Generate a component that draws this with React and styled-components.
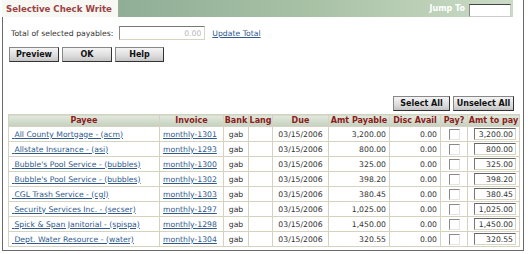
import React from 'react'
import styled, { createGlobalStyle } from 'styled-components'

const GlobalStyle = createGlobalStyle`
  html, body { margin: 0; padding: 0; background: #fff; }
  body { font-family: "DejaVu Sans", Verdana, sans-serif; font-size: 7.7px; color: #333; }
`

const Page = styled.div`
  width: 528px;
  height: 254px;
  overflow: hidden;
`

const Frame = styled.div`
  margin-left: 2px;
  width: 522px;
  height: 251px;
  border-left: 1px solid #6a6a6a;
  border-right: 1px solid #6a6a6a;
  border-bottom: 1px solid #6a6a6a;
  box-sizing: border-box;
`

const TitleRow = styled.div`
  display: flex;
  height: 17px;
  margin-left: -1px;
  margin-right: 10px;
`

const Tab = styled.div`
  display: flex;
  align-items: center;
  padding: 0 6px 0 4px;
  background: #f7f7f3;
  border-right: 1px solid #a0a8a0;
  color: #9a4444;
  font-weight: bold;
  font-size: 8.6px;
`

const Bar = styled.div`
  flex: 1;
  display: flex;
  align-items: center;
  justify-content: flex-end;
  gap: 4px;
  padding-right: 2px;
  background: linear-gradient(to right, #8fae96, #a9c2a6 50%, #cbdbc6);
`

const JumpLabel = styled.span`
  color: #fff;
  font-weight: bold;
  font-size: 8px;
`

const JumpInput = styled.input`
  width: 42px;
  height: 13px;
  box-sizing: border-box;
  border: 1px solid #ccc;
  border-top: 1px solid #444;
  border-left: 1px solid #888;
  background: #fff;
  margin: 3px 0 0;
  padding: 0;
`

const Body = styled.div`
  padding: 9px 5px 0 5px;
`

const TotalRow = styled.div`
  display: flex;
  align-items: center;
  height: 14px;
  padding-left: 3px;
`

const Label = styled.span`
  margin-right: 6px;
`

const AmountBox = styled.input`
  width: 86px;
  height: 14px;
  box-sizing: border-box;
  border: 1px solid #d8d4c4;
  border-top: 1px solid #777;
  border-left: 1px solid #888;
  text-align: right;
  font: inherit;
  color: #b8b8b8;
  padding: 0 3px;
  margin-right: 7px;
`

const Link = styled.a`
  color: #2f5a8e;
  text-decoration: underline;
`

const ButtonRow = styled.div`
  display: flex;
  gap: 3px;
  margin-top: 7px;
  padding-left: 1px;
  justify-content: ${p => (p.$right ? 'flex-end' : 'flex-start')};
  padding-right: ${p => (p.$right ? '1px' : '0')};
`

const Button = styled.button`
  width: ${p => p.$w}px;
  height: 15px;
  padding: 0;
  box-sizing: border-box;
  border: 1px solid #333;
  border-top-color: #888;
  border-left-color: #888;
  background: linear-gradient(to bottom, #f4f4f4, #dcdcdc 60%, #c4c4c4);
  font-family: "DejaVu Sans", Verdana, sans-serif;
  font-size: 8px;
  font-weight: bold;
  color: #111;
`

const SelectRow = styled(ButtonRow)`
  margin-top: 34px;
  padding-right: 4px;
`

const Table = styled.table`
  margin-top: 3px;
  width: 511px;
  border-collapse: collapse;
  table-layout: fixed;
`

const Th = styled.th`
  height: 11px;
  padding: 0;
  background: linear-gradient(to bottom, #e3e9dd, #c3d0bf);
  border: 1px solid #d6d2c0;
  color: #8b1c1c;
  font-weight: bold;
  font-size: 8px;
  text-align: center;
`

const Td = styled.td`
  height: 14px;
  padding: 0 3px;
  border: 1px solid #d6d2c0;
  text-align: ${p => p.$align || 'left'};
  white-space: nowrap;
  overflow: hidden;
`

const Check = styled.span`
  display: inline-block;
  width: 11px;
  height: 11px;
  box-sizing: border-box;
  border: 1px solid #e4e4e4;
  border-top-color: #8a8a8a;
  border-left-color: #8a8a8a;
  background: #fff;
  vertical-align: middle;
`

const PayInput = styled.input`
  width: 42px;
  height: 12px;
  box-sizing: border-box;
  border: 1px solid #d8d4c4;
  border-top: 1px solid #666;
  border-left: 1px solid #777;
  text-align: right;
  font: inherit;
  color: #333;
  padding: 0 2px;
  display: block;
  margin-left: auto;
`

const rows = [
  ['All County Mortgage - (acm)', 'monthly-1301', '3,200.00'],
  ['Allstate Insurance - (asi)', 'monthly-1293', '800.00'],
  ["Bubble's Pool Service - (bubbles)", 'monthly-1300', '325.00'],
  ["Bubble's Pool Service - (bubbles)", 'monthly-1302', '398.20'],
  ['CGL Trash Service - (cgl)', 'monthly-1303', '380.45'],
  ['Security Services Inc. - (secser)', 'monthly-1297', '1,025.00'],
  ['Spick & Span Janitorial - (spispa)', 'monthly-1298', '1,450.00'],
  ['Dept. Water Resource - (water)', 'monthly-1304', '320.55'],
]

const cols = [151, 64, 25, 24, 56, 61, 51, 27, 52]

export default function App() {
  return (
    <Page>
      <GlobalStyle />
      <Frame>
        <TitleRow>
          <Tab>Selective Check Write</Tab>
          <Bar>
            <JumpLabel>Jump To</JumpLabel>
            <JumpInput />
          </Bar>
        </TitleRow>
        <Body>
          <TotalRow>
            <Label>Total of selected payables:</Label>
            <AmountBox readOnly value="0.00" />
            <Link href="#">Update Total</Link>
          </TotalRow>
          <ButtonRow>
            <Button $w={50}>Preview</Button>
            <Button $w={50}>OK</Button>
            <Button $w={49}>Help</Button>
          </ButtonRow>
          <SelectRow $right>
            <Button $w={57}>Select All</Button>
            <Button $w={61}>Unselect All</Button>
          </SelectRow>
          <Table>
            <colgroup>
              {cols.map((w, i) => <col key={i} style={{ width: w }} />)}
            </colgroup>
            <thead>
              <tr>
                <Th>Payee</Th>
                <Th>Invoice</Th>
                <Th>Bank</Th>
                <Th>Lang</Th>
                <Th>Due</Th>
                <Th>Amt Payable</Th>
                <Th>Disc Avail</Th>
                <Th>Pay?</Th>
                <Th>Amt to pay</Th>
              </tr>
            </thead>
            <tbody>
              {rows.map(([payee, inv, amt]) => (
                <tr key={inv}>
                  <Td><Link href="#">&nbsp;{payee}</Link></Td>
                  <Td><Link href="#">{inv}</Link></Td>
                  <Td $align="center">gab</Td>
                  <Td />
                  <Td $align="center">03/15/2006</Td>
                  <Td $align="right">{amt}</Td>
                  <Td $align="right">0.00</Td>
                  <Td $align="center"><Check /></Td>
                  <Td $align="right"><PayInput readOnly value={amt} /></Td>
                </tr>
              ))}
            </tbody>
          </Table>
        </Body>
      </Frame>
    </Page>
  )
}
